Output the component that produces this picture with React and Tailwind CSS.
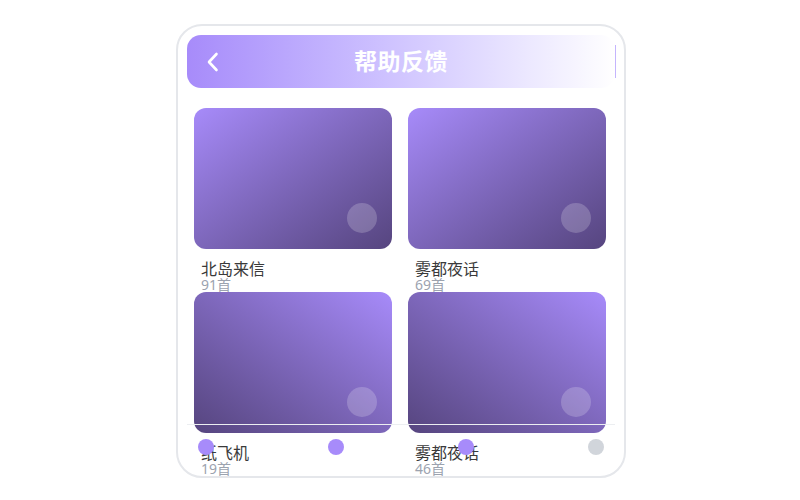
import React from 'react';

const albums = [
  { name: '北岛来信', count: '91首', dir: 'bg-linear-to-br' },
  { name: '雾都夜话', count: '69首', dir: 'bg-linear-to-br' },
  { name: '纸飞机', count: '19首', dir: 'bg-linear-to-bl' },
  { name: '雾都夜话', count: '46首', dir: 'bg-linear-to-bl' },
];

function AlbumCard({ album }) {
  return (
    <div className="h-[184px]">
      <div
        className={`relative h-[141px] rounded-[12px] ${album.dir} from-[#a78bfa] to-[#56457f]`}
      >
        <div className="absolute right-[15px] bottom-[16px] w-[30px] h-[30px] rounded-full bg-white/20" />
      </div>
      <div className="pl-[7px] pt-[12px]">
        <p className="text-[16px] leading-[16px] text-[#3a3a3a]">{album.name}</p>
        <p className="text-[14px] leading-[16px] text-[#9ca3af]">{album.count}</p>
      </div>
    </div>
  );
}

export default function App() {
  return (
    <div
      className="w-[800px] h-[500px] bg-white pt-[24px]"
      style={{ fontFamily: '"Noto Sans", "Noto Sans CJK SC", sans-serif' }}
    >
      <div className="relative ml-[176px] w-[450px] h-[454px] rounded-[26px] border-2 border-[#e5e7eb] overflow-hidden bg-white">
        <div className="px-[9px] pt-[9px]">
          {/* 头部 */}
          <div className="relative h-[53px] rounded-[14px] bg-linear-to-r from-[#a78bfa] to-white flex items-center justify-center">
            <svg
              className="absolute left-[19px] top-[17px]"
              width="14"
              height="20"
              viewBox="0 0 14 20"
              fill="none"
            >
              <polyline
                points="10.5,2 3,10 10.5,18"
                stroke="white"
                strokeWidth="2.6"
                strokeLinecap="round"
                strokeLinejoin="round"
              />
            </svg>
            <h1 className="text-[23px] font-bold text-white tracking-[0.5px]">帮助反馈</h1>
            <div className="absolute right-[-1px] top-[10px] w-[1.5px] h-[33px] bg-[#c4b5fd]" />
          </div>

          {/* 列表 */}
          <div className="pl-[7px] pr-[7px] pt-[20px] grid grid-cols-[198px_198px] gap-x-[16px]">
            {albums.map((a, i) => (
              <AlbumCard key={i} album={a} />
            ))}
          </div>
        </div>

        {/* 底部导航 */}
        <div className="absolute left-[9px] right-[9px] top-[398px] h-[50px] border-t border-[#eceef1] px-[11px] pt-[14px] flex justify-between">
          <span className="w-[16px] h-[16px] rounded-full bg-[#a78bfa]" />
          <span className="w-[16px] h-[16px] rounded-full bg-[#a78bfa]" />
          <span className="w-[16px] h-[16px] rounded-full bg-[#a78bfa]" />
          <span className="w-[16px] h-[16px] rounded-full bg-[#d1d5db]" />
        </div>
      </div>
    </div>
  );
}
